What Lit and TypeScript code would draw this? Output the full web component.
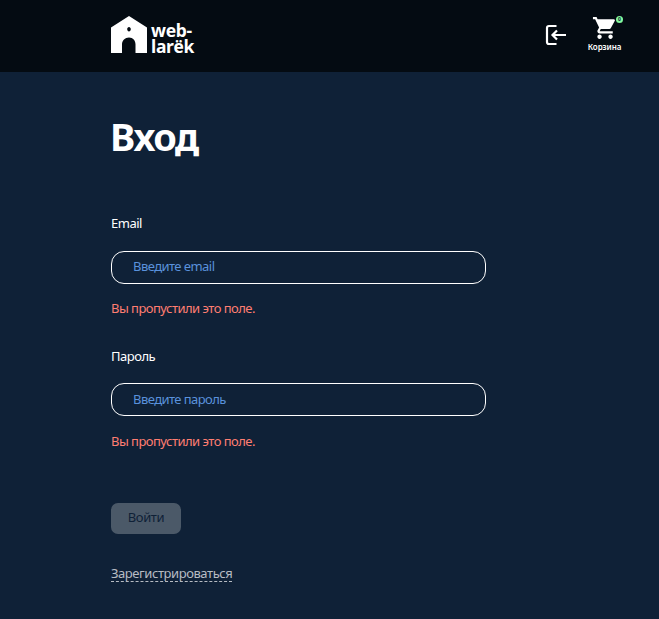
import { LitElement, html, css } from "lit";
import { customElement, property } from "lit/decorators.js";

@customElement("form-field")
class FormField extends LitElement {
  @property() label = "";
  @property() hint = "";
  @property() type = "text";
  @property() error = "";

  static styles = css`
    :host { display: block; }
    .label { display: block; height: 18px; font-size: 13px; line-height: 18px; letter-spacing: -0.5px; color: #fff; }
    .input {
      display: block; box-sizing: border-box; width: 375px; height: 33px; margin: var(--field-gap, 19px) 0 var(--error-gap, 15px);
      padding: 0 21px var(--text-lift, 3px); border: 1px solid #fff; border-radius: 13px; background: transparent;
      color: #fff; font: 13px "Noto Sans", sans-serif; letter-spacing: -0.56px; outline: none;
    }
    .input::placeholder { color: #5a92dc; opacity: 1; }
    .error { height: 18px; font-size: 13px; line-height: 18px; letter-spacing: -0.53px; color: #ff7e72; white-space: nowrap; }
  `;

  render() {
    return html`
      <label class="label" for="field">${this.label}</label>
      <input class="input" id="field" type=${this.type} placeholder=${this.hint} />
      <div class="error">${this.error}</div>
    `;
  }
}

@customElement("app-root")
class AppRoot extends LitElement {
  static styles = css`
    :host { display: block; min-height: 619px; background: #0f2137; color: #fff; font-family: "Noto Sans", sans-serif; }
    .header { box-sizing: border-box; height: 72px; padding: 16px 36px 0 111px; background: #040b12; display: flex; justify-content: space-between; align-items: flex-start; }
    .logo { display: flex; gap: 4px; }
    .name { padding-top: 7px; font-size: 17.5px; font-weight: 700; line-height: 15.5px; letter-spacing: -0.3px; }
    .actions { display: flex; }
    .login { margin: 8px 19px 0 0; }
    .basket { position: relative; width: 37px; text-align: center; }
    .cart { display: block; margin: 1px auto 0; }
    .caption { font-size: 8px; line-height: 10px; margin-top: 3px; font-weight: 600; letter-spacing: -0.1px; white-space: nowrap; }
    .badge { position: absolute; right: 0; top: 0; width: 7px; height: 7px; border-radius: 50%; background: #83fa9d; color: #10243a; font-size: 5px; line-height: 7px; font-weight: 700; }
    .main { padding: 39px 0 0 110px; }
    .title { margin: 0; height: 50px; font-size: 38px; line-height: 50px; font-weight: 700; letter-spacing: -1.4px; }
    .form { display: flex; flex-direction: column; align-items: flex-start; padding: 53px 0 0 1px; }
    .second { margin-top: 30px; --field-gap: 18px; --error-gap: 16px; --text-lift: 1px; }
    .submit { width: 70px; height: 31px; margin-top: 53px; padding: 0 0 3px; border: 0; border-radius: 7px; background: #4b5968; color: #0f2137; font: 13px "Noto Sans", sans-serif; letter-spacing: -0.4px; }
    .register { margin-top: 32px; height: 15px; font-size: 13px; line-height: 15px; letter-spacing: -0.43px; color: #b7bcc3; border-bottom: 1px dashed #b7bcc3; text-decoration: none; white-space: nowrap; }
  `;

  render() {
    return html`
      <header class="header">
        <div class="logo">
          <svg width="36" height="37" viewBox="0 0 36 37" fill="#fff" fill-rule="evenodd">
            <path d="M18 0 36 11.5V37H24.5V28.5C24.5 24.5 22 21.5 18 21.5S11 24.5 11 28.5V37H0V11.5ZM18 11C17 11 16.2 12 16.2 13.2S17 15.5 18 15.5 19.8 14.4 19.8 13.2 19 11 18 11Z" />
          </svg>
          <div class="name">web-<br />larёk</div>
        </div>
        <nav class="actions">
          <svg class="login" width="22" height="22" viewBox="0 0 22 22" fill="none" stroke="#fff" stroke-width="2.2">
            <path d="M11.5 2H4Q2 2 2 4V18Q2 20 4 20H11.5M21 11H8M12 6.5 7.5 11 12 15.5" />
          </svg>
          <div class="basket">
            <svg class="cart" width="25" height="22" viewBox="1 2 21 20" fill="#fff">
              <path d="M7 18c-1.1 0-1.99.9-1.99 2S5.9 22 7 22s2-.9 2-2-.9-2-2-2zM1 2v2h2l3.6 7.59-1.35 2.45c-.16.28-.25.61-.25.96 0 1.1.9 2 2 2h12v-2H7.42c-.14 0-.25-.11-.25-.25l.03-.12.9-1.63h7.45c.75 0 1.41-.41 1.75-1.03l3.58-6.49A1 1 0 0 0 20 4H5.21l-.94-2H1zm16 16c-1.1 0-1.99.9-1.99 2s.89 2 1.99 2 2-.9 2-2-.9-2-2-2z" />
            </svg>
            <div class="caption">Корзина</div>
            <span class="badge">0</span>
          </div>
        </nav>
      </header>
      <main class="main">
        <h1 class="title">Вход</h1>
        <form class="form">
          <form-field label="Email" type="email" hint="Введите email" error="Вы пропустили это поле."></form-field>
          <form-field class="second" label="Пароль" type="password" hint="Введите пароль" error="Вы пропустили это поле."></form-field>
          <button class="submit" type="button">Войти</button>
          <a class="register" href="#">Зарегистрироваться</a>
        </form>
      </main>
    `;
  }
}
